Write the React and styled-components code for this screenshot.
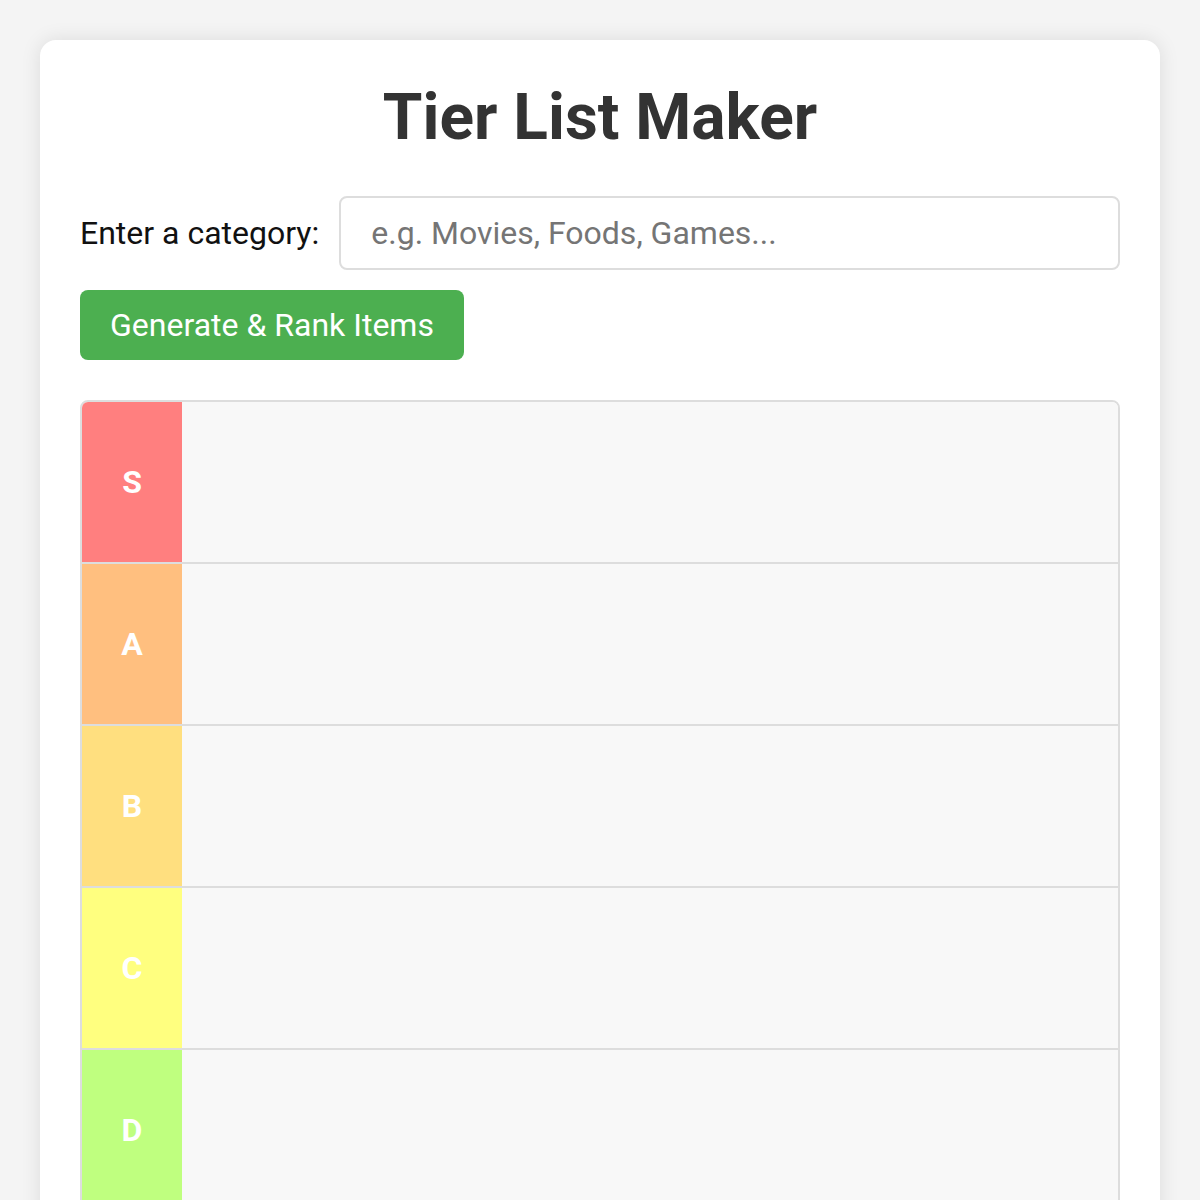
import React from "react";
import styled, { createGlobalStyle } from "styled-components";

const GlobalStyle = createGlobalStyle`
  * { box-sizing: border-box; }
  html, body {
    margin: 0;
    padding: 0;
    background: #f4f4f4;
    font-family: Roboto, "Liberation Sans", Arial, sans-serif;
  }
  body { padding: 40px; }
`;

const Card = styled.main`
  background: #ffffff;
  border-radius: 16px;
  box-shadow: 0 0 20px rgba(0, 0, 0, 0.1);
  padding: 40px;
`;

const Title = styled.h1`
  margin: 0 0 41px;
  text-align: center;
  font-size: 64px;
  font-weight: 700;
  color: #333333;
  line-height: 75px;
`;

const InputRow = styled.div`
  display: flex;
  align-items: center;
  gap: 20px;
  margin-bottom: 20px;
`;

const Label = styled.label`
  font-size: 32px;
  color: #111111;
  white-space: nowrap;
`;

const TextInput = styled.input`
  flex: 1;
  height: 74px;
  padding: 0 30px;
  border: 2px solid #dddddd;
  border-radius: 8px;
  font-family: inherit;
  font-size: 32px;
  color: #333;
  outline: none;
  &::placeholder { color: #757575; }
`;

const Button = styled.button`
  height: 70px;
  padding: 0 30px;
  border: none;
  border-radius: 8px;
  background: #4caf50;
  color: #ffffff;
  font-family: inherit;
  font-size: 32px;
  cursor: pointer;
`;

const TierList = styled.section`
  margin-top: 40px;
  border: 2px solid #dddddd;
  border-radius: 8px;
  overflow: hidden;
`;

const TierRow = styled.div`
  display: flex;
  min-height: 162px;
  border-bottom: 2px solid #dddddd;
  &:last-child { border-bottom: none; }
`;

const TierLabel = styled.div`
  width: 100px;
  flex-shrink: 0;
  display: flex;
  align-items: center;
  justify-content: center;
  background: ${(p) => p.$color};
  color: #ffffff;
  font-size: 32px;
  font-weight: 700;
`;

const TierItems = styled.div`
  flex: 1;
  background: #f8f8f8;
  display: flex;
  flex-wrap: wrap;
  gap: 10px;
  padding: 10px;
`;

const tiers = [
  { name: "S", color: "#ff7f7f" },
  { name: "A", color: "#ffbf7f" },
  { name: "B", color: "#ffdf7f" },
  { name: "C", color: "#ffff7f" },
  { name: "D", color: "#bfff7f" },
  { name: "F", color: "#7fbfff" },
];

export default function App() {
  return (
    <>
      <GlobalStyle />
      <Card>
        <Title>Tier List Maker</Title>
        <InputRow>
          <Label htmlFor="category">Enter a category:</Label>
          <TextInput id="category" placeholder="e.g. Movies, Foods, Games..." />
        </InputRow>
        <Button>Generate &amp; Rank Items</Button>
        <TierList>
          {tiers.map((t) => (
            <TierRow key={t.name}>
              <TierLabel $color={t.color}>{t.name}</TierLabel>
              <TierItems />
            </TierRow>
          ))}
        </TierList>
      </Card>
    </>
  );
}
